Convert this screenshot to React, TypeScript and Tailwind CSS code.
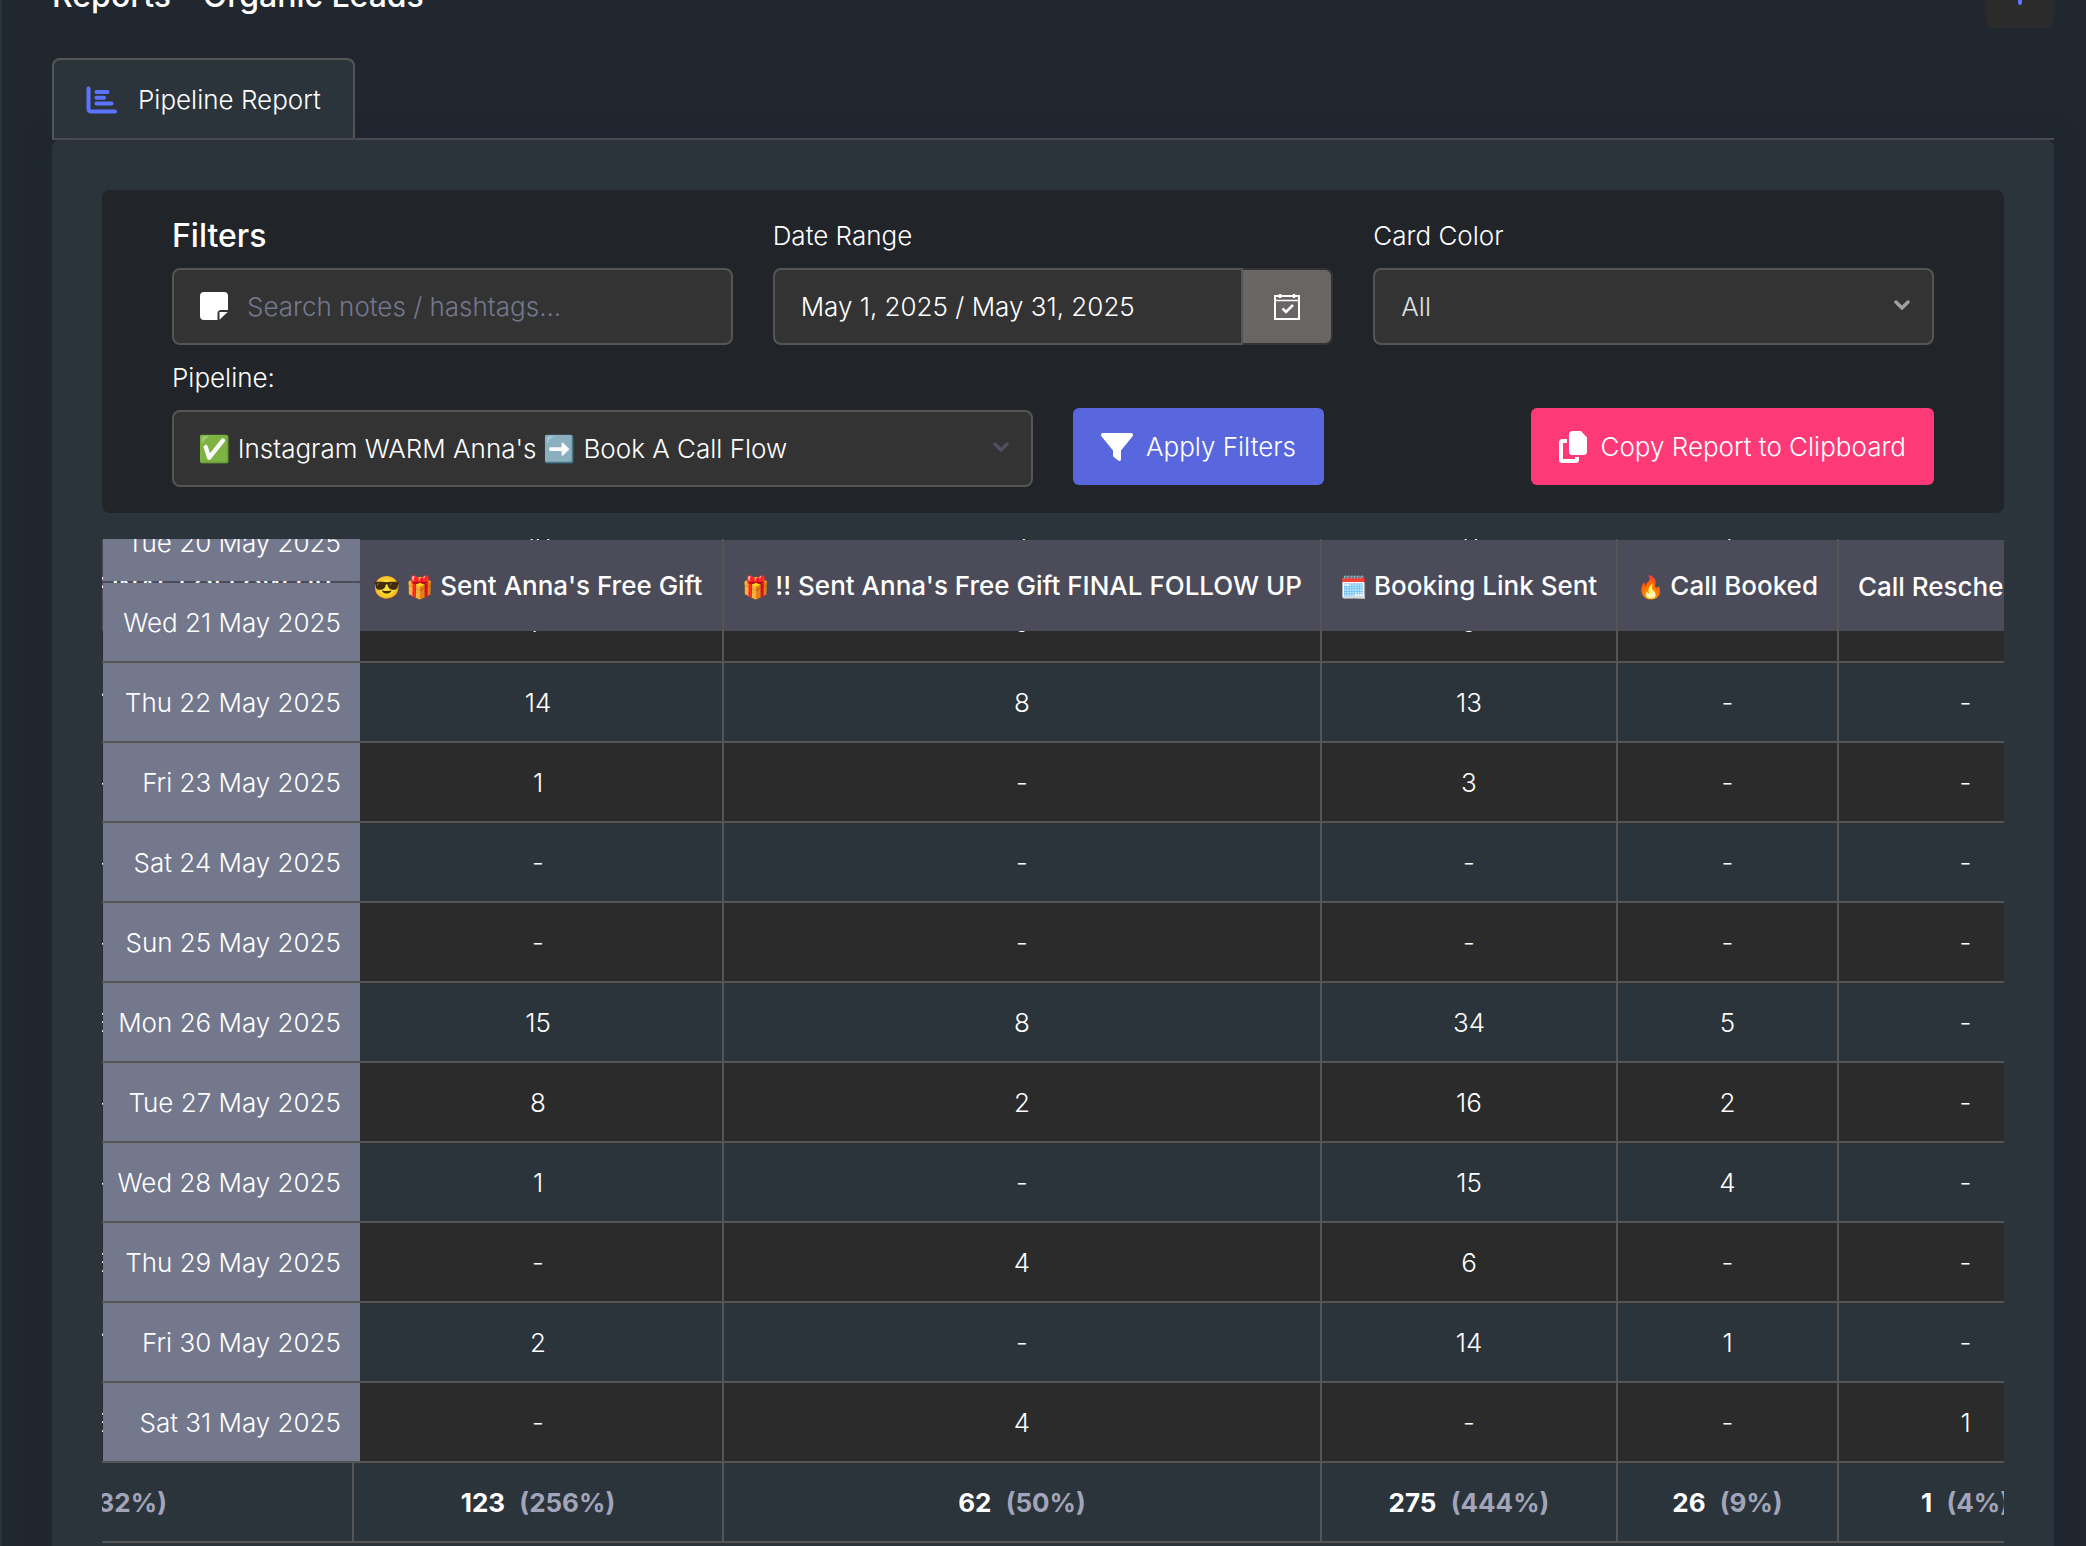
import { useLayoutEffect, useRef, type ReactNode } from "react"

type Row = { date: string; values: string[] }

const STAGES = [
  { emoji: "", label: "Second Message FINAL FOLLOW UP", width: "w-[500px]", total: "48", rate: "32%" },
  { emoji: "😎 🎁", label: "Sent Anna's Free Gift", width: "w-[370px]", total: "123", rate: "256%" },
  { emoji: "🎁", label: "!! Sent Anna's Free Gift FINAL FOLLOW UP", width: "w-[598px]", total: "62", rate: "50%" },
  { emoji: "🗓️", label: "Booking Link Sent", width: "w-[296px]", total: "275", rate: "444%" },
  { emoji: "🔥", label: "Call Booked", width: "w-[221px]", total: "26", rate: "9%" },
  { emoji: "", label: "Call Rescheduled", width: "w-[255px]", total: "1", rate: "4%" },
]

const ROWS: Row[] = [
  { date: "Tue 20 May 2025", values: ["2", "10", "1", "11", "1", "-"] },
  { date: "Wed 21 May 2025", values: ["-", "7", "9", "9", "-", "-"] },
  { date: "Thu 22 May 2025", values: ["1", "14", "8", "13", "-", "-"] },
  { date: "Fri 23 May 2025", values: ["-", "1", "-", "3", "-", "-"] },
  { date: "Sat 24 May 2025", values: ["-", "-", "-", "-", "-", "-"] },
  { date: "Sun 25 May 2025", values: ["-", "-", "-", "-", "-", "-"] },
  { date: "Mon 26 May 2025", values: ["3", "15", "8", "34", "5", "-"] },
  { date: "Tue 27 May 2025", values: ["-", "8", "2", "16", "2", "-"] },
  { date: "Wed 28 May 2025", values: ["-", "1", "-", "15", "4", "-"] },
  { date: "Thu 29 May 2025", values: ["3", "-", "4", "6", "-", "-"] },
  { date: "Fri 30 May 2025", values: ["1", "2", "-", "14", "1", "-"] },
  { date: "Sat 31 May 2025", values: ["3", "-", "4", "-", "-", "1"] },
]

function ChartIcon() {
  return (
    <svg viewBox="0 0 32 28" className="h-7 w-8 text-[#5b73ff]" fill="none" stroke="currentColor" strokeWidth="4" strokeLinecap="round" strokeLinejoin="round">
      <path d="M2.500 2.500v20q0 3 3 3h23.500" />
      <path d="M10.500 6h11M10.500 11.700h7.500M10.500 17.500h15" />
    </svg>
  )
}

function NoteIcon() {
  return (
    <svg viewBox="0 0 28 28" className="mb-[2px] h-7 w-7 shrink-0 text-white" fill="currentColor">
      <path d="M4 0h20a4 4 0 0 1 4 4v14h-7a3.500 3.500 0 0 0-3.500 3.500V28H4a4 4 0 0 1-4-4V4a4 4 0 0 1 4-4z" />
      <path d="M19.500 20h8.200L19.500 27.800z" />
    </svg>
  )
}

function CalendarIcon() {
  return (
    <svg viewBox="0 0 26 28" className="h-7 w-[26px]" fill="none" stroke="currentColor" strokeWidth="2">
      <path d="M1 3h24v23H1z" />
      <path d="M1 7.500h24" strokeWidth="1.500" />
      <path d="M6 1v4M20 1v4" strokeWidth="2.500" />
      <path d="M8.500 15.500l3.500 3.500 7-7" strokeWidth="2.500" />
    </svg>
  )
}

function FunnelIcon() {
  return (
    <svg viewBox="0 0 32 28" className="h-7 w-8" fill="currentColor">
      <path d="M2 0h28a2 2 0 0 1 1.600 3.200L20 17.500V26.500a1.500 1.500 0 0 1-2.400 1.200l-4.600-3.400a2.500 2.500 0 0 1-1-2V17.500L.4 3.200A2 2 0 0 1 2 0z" />
    </svg>
  )
}

function CopyIcon() {
  return (
    <svg viewBox="0 0 28 32" className="h-8 w-7" fill="currentColor">
      <path d="M13.500 0H22l6 6.500V20.500a3.500 3.500 0 0 1-3.500 3.500h-11a3.500 3.500 0 0 1-3.500-3.500v-17A3.500 3.500 0 0 1 13.500 0z" />
      <path d="M3.500 8H8v4H4v16h12v-2h4v2.500a3.500 3.500 0 0 1-3.500 3.500h-13A3.500 3.500 0 0 1 0 28.500v-17A3.500 3.500 0 0 1 3.500 8z" />
    </svg>
  )
}

function Chevron({ className }: { className: string }) {
  return (
    <svg viewBox="0 0 16 10" className={className} fill="none" stroke="currentColor" strokeWidth="3.500" strokeLinecap="round" strokeLinejoin="round">
      <path d="M2 2l6 6 6-6" />
    </svg>
  )
}

function Field({ id, label, children }: { id: string; label: ReactNode; children: ReactNode }) {
  return (
    <div className="min-w-0 flex-1">
      <label htmlFor={id} className="flex h-10 items-center">{label}</label>
      <div className="mt-3">{children}</div>
    </div>
  )
}

function Filters() {
  return (
    <form className="rounded-lg bg-[#212429] px-[70px] py-[26px]" onSubmit={(e) => e.preventDefault()}>
      <div className="flex gap-10">
        <Field id="notes" label={<span className="text-[32px] font-medium">Filters</span>}>
          <div className="flex h-[77px] items-center gap-[19px] rounded-lg border-2 border-[#555] bg-[#333] px-[26px]">
            <NoteIcon />
            <input id="notes" type="text" placeholder="Search notes / hashtags..." className="min-w-0 flex-1 bg-transparent outline-none placeholder:text-[#74788d]" />
          </div>
        </Field>
        <Field id="range" label="Date Range">
          <div className="flex h-[77px]">
            <input id="range" type="text" defaultValue="May 1, 2025 / May 31, 2025" className="min-w-0 flex-1 rounded-l-lg border-2 border-[#555] bg-[#333] px-[26px] font-[350] outline-none" />
            <button type="button" aria-label="Pick dates" className="flex w-[90px] items-center justify-center rounded-r-lg border-y-2 border-r-2 border-[#333] bg-[#6a6565]">
              <CalendarIcon />
            </button>
          </div>
        </Field>
        <Field id="color" label="Card Color">
          <div className="relative">
            <select id="color" className="h-[77px] w-full appearance-none rounded-lg border-2 border-[#555] bg-[#333] px-[26px] text-[#e0e0e0] outline-none">
              <option>All</option>
            </select>
            <Chevron className="pointer-events-none absolute top-8 right-6 h-[10px] w-4 text-[#a0a0a0]" />
          </div>
        </Field>
      </div>

      <div className="mt-[13px] flex items-end gap-10">
        <div className="w-[861px]">
          <label htmlFor="pipeline" className="flex h-10 items-center">Pipeline:</label>
          <div className="relative mt-3">
            <select id="pipeline" className="h-[77px] w-full appearance-none rounded-lg border-2 border-[#555] bg-[#333] px-6 font-[350] outline-none">
              <option>✅ Instagram WARM Anna's ➡️ Book A Call Flow</option>
            </select>
            <Chevron className="pointer-events-none absolute top-8 right-6 h-[10px] w-4 text-[#4f5061]" />
          </div>
        </div>
        <div className="mb-[2px] flex flex-1 justify-between">
          <button type="submit" className="flex h-[77px] items-center gap-[13px] rounded-md bg-[#5867dd] px-7 font-[350]">
            <FunnelIcon />
            Apply Filters
          </button>
          <button type="button" className="flex h-[77px] items-center gap-[13px] rounded-md bg-[#fd3977] px-7 font-[350]">
            <CopyIcon />
            Copy Report to Clipboard
          </button>
        </div>
      </div>
    </form>
  )
}

function ReportTable() {
  const scroller = useRef<HTMLDivElement>(null)

  // Open on the last days of the month, past the first stage
  useLayoutEffect(() => {
    scroller.current?.scrollTo(508, 129)
  }, [])

  return (
    <div ref={scroller} className="mt-[26px] h-[1004px] overflow-auto [scrollbar-width:none]">
      <table className="w-[2498px] table-fixed border-collapse">
        <colgroup>
          <col className="w-[258px]" />
          {STAGES.map((s) => <col key={s.label} className={s.width} />)}
        </colgroup>
        <thead>
          <tr className="h-[92px]">
            <th className="sticky top-px z-10 bg-[#4b4b5a]"></th>
            {STAGES.map((s) => (
              <th key={s.label} className="sticky top-px z-10 border-x-2 border-[#555] bg-[#4b4b5a] pt-[2px] font-medium whitespace-nowrap">
                {s.emoji && <span className="text-[22px]">{s.emoji} </span>}
                {s.label}
              </th>
            ))}
          </tr>
        </thead>
        <tbody>
          {ROWS.map((row) => (
            <tr key={row.date} className="h-20 odd:bg-[#2c343b] even:bg-[#2b2b2b]">
              <th scope="row" className="sticky left-px z-20 border-y-2 border-[#555] bg-[#74788d] pt-[2px] pr-[19px] text-right font-light whitespace-nowrap">{row.date}</th>
              {row.values.map((value, i) => (
                <td key={i} className="border-2 border-[#555] pt-[2px] text-center">{value}</td>
              ))}
            </tr>
          ))}
        </tbody>
        <tfoot>
          <tr className="h-20 font-bold">
            <td className="border-2 border-[#555]"></td>
            {STAGES.map((s) => (
              <td key={s.label} className="border-2 border-[#555] pt-[2px] text-center whitespace-nowrap">
                {s.total} <span className="ml-2 text-[#a2a5b9]">({s.rate})</span>
              </td>
            ))}
          </tr>
        </tfoot>
      </table>
    </div>
  )
}

export default function App() {
  return (
    <div className="h-screen overflow-hidden border-l-2 border-[#2c343b] bg-[#20272e] pr-8 pl-[50px] font-['Inter','Noto_Color_Emoji',sans-serif] text-[26px] leading-10 font-light text-white">
      <header className="flex h-[58px] items-start justify-between">
        <h1 className="-mt-6 text-[32px] font-medium">Reports - Organic Leads</h1>
        <button type="button" aria-label="Add" className="-mt-10 flex h-[68px] w-[68px] items-center justify-center rounded-lg bg-[#2b2b2b]">
          <svg viewBox="0 0 24 24" className="-mt-[2px] h-6 w-6 text-[#5b73ff]" fill="none" stroke="currentColor" strokeWidth="4" strokeLinecap="round">
            <path d="M12 2v20M2 12h20" />
          </svg>
        </button>
      </header>

      <nav className="flex border-b-2 border-[#555]">
        <a href="#pipeline" className="flex h-20 items-center gap-5 rounded-t-lg border-x-2 border-t-2 border-[#555] bg-[#2c343b] px-8 pt-[2px] font-[350]">
          <ChartIcon />
          Pipeline Report
        </a>
      </nav>

      <main className="rounded-lg bg-[#2c343b] px-[50px] pt-[50px] pb-10 shadow-[0_0_26px_rgba(31,38,60,0.5)]">
        <Filters />
        <ReportTable />
      </main>
    </div>
  )
}
